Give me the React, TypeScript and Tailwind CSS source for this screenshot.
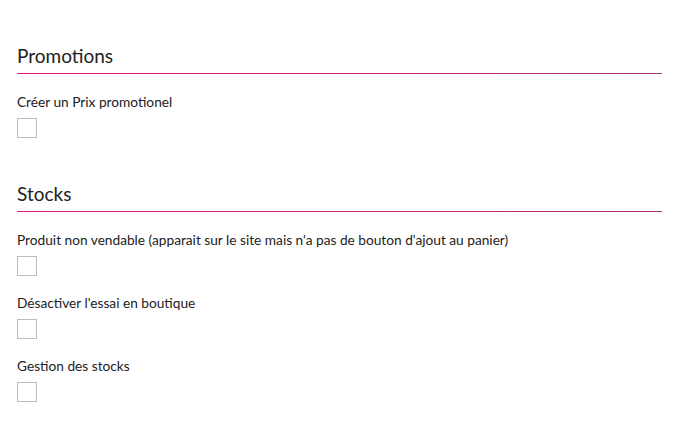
export default function App() {
  return (
    <div
      className="min-h-[445px] bg-white pl-[17px] pr-[15px] pt-[44px] text-[#222]"
      style={{ fontFamily: "Lato, 'Liberation Sans', sans-serif" }}
    >
      <Section title="Promotions">
        <Field label="Créer un Prix promotionel" />
      </Section>

      <Section title="Stocks">
        <Field label="Produit non vendable (apparait sur le site mais n'a pas de bouton d'ajout au panier)" />
        <Field label="Désactiver l'essai en boutique" />
        <Field label="Gestion des stocks" />
      </Section>
    </div>
  );
}

function Section({ title, children }: { title: string; children: React.ReactNode }) {
  return (
    <section className="mb-[44px]">
      <h2 className="text-[19px] leading-[24px] font-normal">{title}</h2>
      <div className="mt-[5px] h-px bg-gradient-to-r from-[#e8147f] via-[#d02470] to-[#a8336f]" />
      <div className="mt-[19px] flex flex-col gap-[18px]">{children}</div>
    </section>
  );
}

function Field({ label }: { label: string }) {
  return (
    <div>
      <p className="text-[13.7px] leading-[18px]">{label}</p>
      <div className="mt-[7px] h-5 w-5 border border-[#bdbdbd] bg-white" />
    </div>
  );
}
